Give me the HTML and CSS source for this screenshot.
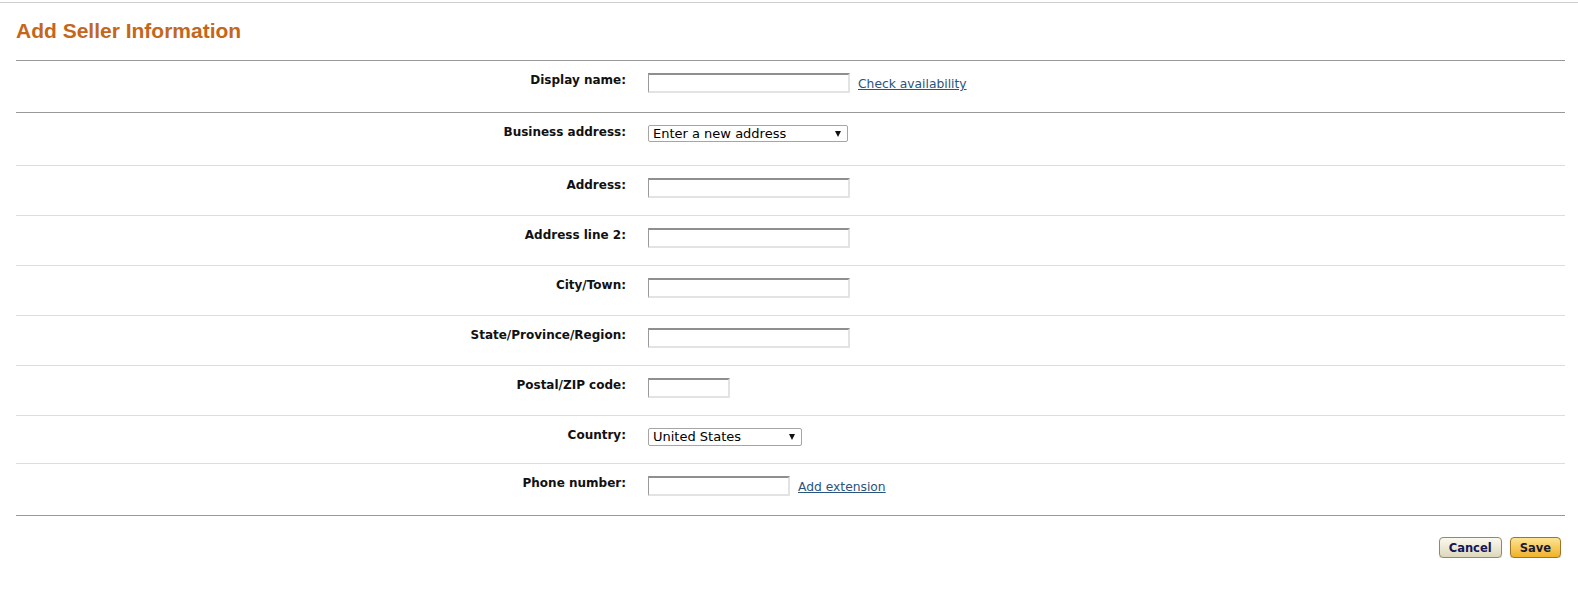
FILE: index.html
```html
<!DOCTYPE html>
<html lang="en">

<head>
    <meta charset="UTF-8">
    <meta name="viewport" content="width=device-width, initial-scale=1.0">
    <title>Add Seller Information</title>
    <link rel="stylesheet" href="styles.css">
</head>

<body>
    <div class="top-rule"></div>

    <div class="page">
        <h1>Add Seller Information</h1>

        <div class="form-block">
            <div class="field-row row-display">
                <label class="field-label" for="display-name">Display name:</label>
                <div class="field-control">
                    <input class="text-input" id="display-name" type="text">
                    <a class="field-link" href="#">Check availability</a>
                </div>
            </div>
        </div>

        <div class="form-block address-block">
            <div class="field-row row-business">
                <label class="field-label">Business address:</label>
                <div class="field-control">
                    <span class="select-box business-select">Enter a new address</span>
                </div>
            </div>
            <div class="field-row">
                <label class="field-label" for="address1">Address:</label>
                <div class="field-control">
                    <input class="text-input" id="address1" type="text">
                </div>
            </div>
            <div class="field-row">
                <label class="field-label" for="address2">Address line 2:</label>
                <div class="field-control">
                    <input class="text-input" id="address2" type="text">
                </div>
            </div>
            <div class="field-row">
                <label class="field-label" for="city">City/Town:</label>
                <div class="field-control">
                    <input class="text-input" id="city" type="text">
                </div>
            </div>
            <div class="field-row">
                <label class="field-label" for="state">State/Province/Region:</label>
                <div class="field-control">
                    <input class="text-input" id="state" type="text">
                </div>
            </div>
            <div class="field-row">
                <label class="field-label" for="zip">Postal/ZIP code:</label>
                <div class="field-control">
                    <input class="text-input zip-input" id="zip" type="text">
                </div>
            </div>
            <div class="field-row row-country">
                <label class="field-label">Country:</label>
                <div class="field-control">
                    <span class="select-box country-select">United States</span>
                </div>
            </div>
            <div class="field-row row-phone">
                <label class="field-label" for="phone">Phone number:</label>
                <div class="field-control">
                    <input class="text-input phone-input" id="phone" type="text">
                    <a class="field-link" href="#">Add extension</a>
                </div>
            </div>
        </div>

        <div class="actions">
            <button class="btn btn-cancel">Cancel</button>
            <button class="btn btn-save">Save</button>
        </div>
    </div>
</body>

</html>
```

FILE: styles.css
```css
body {
    margin: 0;
    padding: 0;
    background-color: #fff;
    font-family: "DejaVu Sans", Verdana, sans-serif;
    color: #000;
}

.top-rule {
    height: 1px;
    margin-top: 2px;
    background-color: #cfcfcf;
}

.page {
    padding: 0 13px 0 16px;
}

h1 {
    margin: 16px 0 17px;
    font-family: "Liberation Sans", Arial, sans-serif;
    font-size: 21px;
    line-height: 24px;
    font-weight: bold;
    color: #c4661c;
}

.form-block {
    border-top: 1px solid #999;
}

.address-block {
    border-bottom: 1px solid #999;
}

.field-row {
    display: grid;
    grid-template-columns: 610px auto;
    column-gap: 22px;
    align-items: start;
    box-sizing: border-box;
    height: 50px;
    padding-top: 12px;
    border-top: 1px solid #ddd;
}

.row-display {
    border-top: none;
    height: 51px;
}

.row-business {
    border-top: none;
    height: 52px;
}

.row-country {
    height: 48px;
}

.row-phone {
    height: 52px;
}

.field-label {
    text-align: right;
    font-size: 12px;
    line-height: 14px;
    font-weight: bold;
    color: #111;
}

.field-control {
    display: flex;
    align-items: flex-start;
    gap: 8px;
}

.text-input {
    box-sizing: border-box;
    width: 202px;
    height: 20px;
    margin: 0;
    padding: 0 3px;
    border-style: solid;
    border-width: 2px 2px 2px 1px;
    border-color: #8f8f8f #e3e3e3 #e3e3e3 #9a9a9a;
    background-color: #fff;
    font-family: "DejaVu Sans", Verdana, sans-serif;
    font-size: 12px;
}

.zip-input {
    width: 82px;
}

.phone-input {
    width: 142px;
}

.field-link {
    font-size: 12.3px;
    line-height: 20px;
    padding-top: 1px;
    color: #2a5480;
    text-decoration: underline;
}

.select-box {
    position: relative;
    display: block;
    box-sizing: border-box;
    padding-left: 4px;
    border: 1px solid #a5a5a5;
    border-radius: 2px;
    background-color: #fff;
    font-size: 13px;
    color: #000;
}

/* little black arrow of the dropdown */
.select-box::after {
    content: "";
    position: absolute;
    right: 6px;
    top: 50%;
    margin-top: -3px;
    border-left: 3.5px solid transparent;
    border-right: 3.5px solid transparent;
    border-top: 6px solid #111;
}

.business-select {
    width: 200px;
    height: 17px;
    line-height: 15px;
}

.country-select {
    width: 154px;
    height: 18px;
    line-height: 16px;
}

.actions {
    display: flex;
    justify-content: flex-end;
    gap: 8px;
    margin-top: 21px;
    padding-right: 4px;
}

.btn {
    height: 21px;
    padding: 0 9px;
    border-radius: 4px;
    font-family: "DejaVu Sans", Verdana, sans-serif;
    font-size: 11.5px;
    font-weight: bold;
    cursor: pointer;
}

.btn-cancel {
    border: 1px solid #8e8a72;
    background: linear-gradient(#fbf9ee, #ddd8bb);
    color: #141458;
    box-shadow: 0 1px 1px rgba(0, 0, 0, 0.15);
}

.btn-save {
    border: 1px solid #9b7627;
    background: linear-gradient(#fde493, #f0b22a);
    color: #1a1a2e;
    box-shadow: 0 1px 1px rgba(0, 0, 0, 0.2);
}
```
